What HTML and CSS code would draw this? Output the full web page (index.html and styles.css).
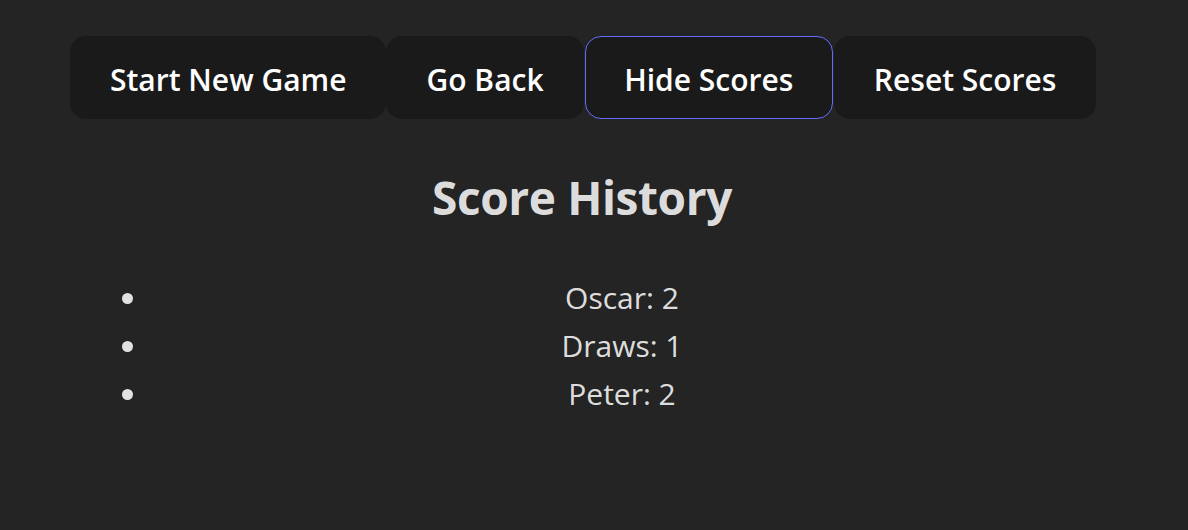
FILE: index.html
```html
<!DOCTYPE html>
<html lang="en">
<head>
<meta charset="utf-8">
<title>Score History</title>
<link rel="stylesheet" href="styles.css">
</head>
<body>
<div class="app">
  <div class="controls">
    <button class="btn">Start New Game</button>
    <button class="btn">Go Back</button>
    <button class="btn btn-active">Hide Scores</button>
    <button class="btn">Reset Scores</button>
  </div>
  <h2 class="title">Score History</h2>
  <ul class="scores">
    <li>Oscar: 2</li>
    <li>Draws: 1</li>
    <li>Peter: 2</li>
  </ul>
</div>
</body>
</html>
```

FILE: styles.css
```css
html, body {
  margin: 0;
  padding: 0;
  background: #242424;
}
body {
  font-family: "Open Sans", "Noto Sans", sans-serif;
  color: rgba(255, 255, 255, 0.87);
  height: 530px;
}
.app {
  width: 1024px;
  margin-left: 70px;
  padding-top: 36px;
  text-align: center;
}
.controls {
  display: flex;
}
.btn {
  flex: 0 0 auto;
  white-space: nowrap;
  font-family: inherit;
  font-size: 30px;
  font-weight: 600;
  color: #fff;
  background: #1a1a1a;
  border: 1px solid transparent;
  border-radius: 16px;
  padding: 5px 39px 0;
  height: 83px;
  line-height: 1;
  cursor: pointer;
}
.btn-active {
  border-color: #646cff;
  margin: 0 1px;
  padding: 5px 38.5px 0;
}
.title {
  font-size: 46px;
  font-weight: 700;
  line-height: 72px;
  margin: 42px 0 0;
  letter-spacing: -0.4px;
}
.scores {
  margin: 41px 0 0;
  padding-left: 80px;
  font-size: 30px;
  line-height: 48px;
}
```
